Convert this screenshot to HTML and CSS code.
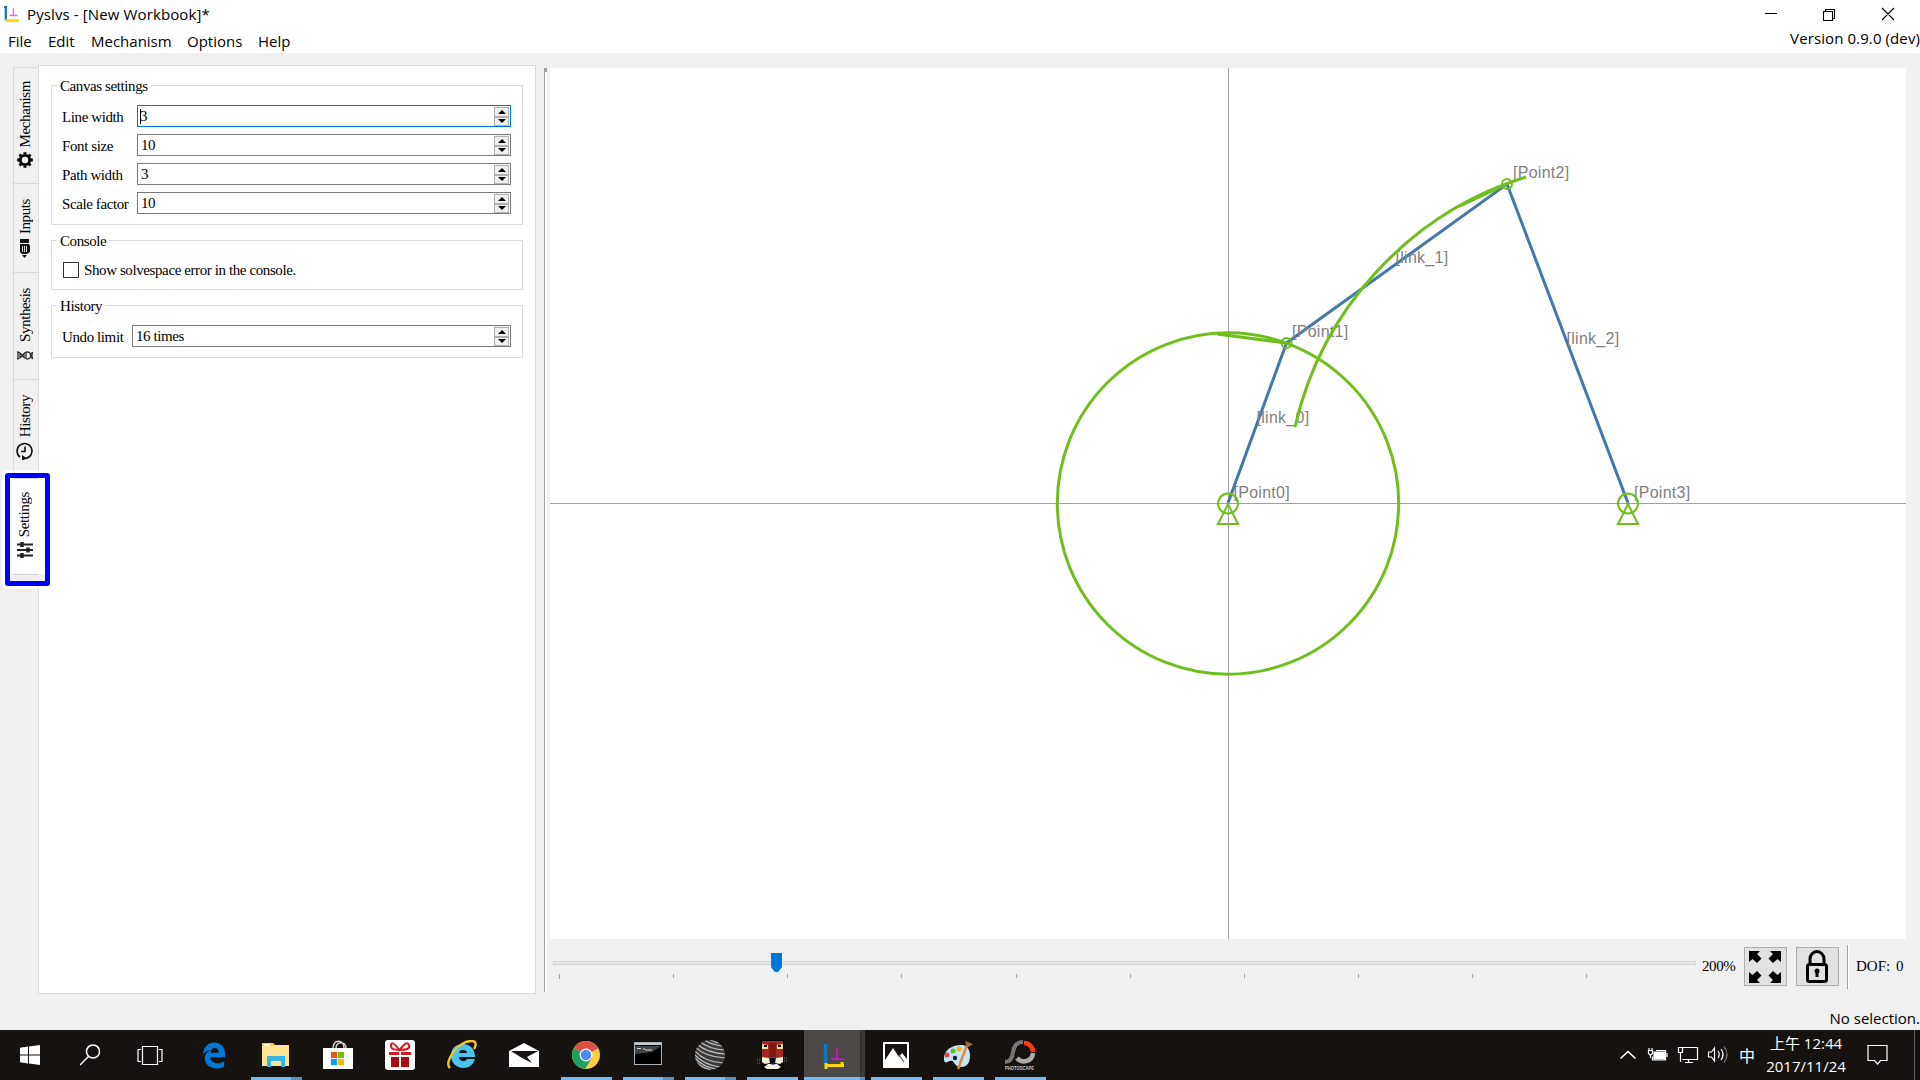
FILE: index.html
```html
<!DOCTYPE html>
<html lang="en">
<head>
<meta charset="utf-8">
<title>Pyslvs - [New Workbook]*</title>
<link rel="stylesheet" href="styles.css">
</head>
<body>
<div class="screen">
  <header class="titlebar">
    <svg class="app-icon" width="16" height="18" viewBox="0 0 16 18"><path d="M0 2h3M1.8 1v15" stroke="#1072b8" stroke-width="2.2" fill="none"/><path d="M1 15.500h14" stroke="#ffd400" stroke-width="2.500"/><path d="M9.5 3v7M5.500 10.500h8" stroke="#f25fe8" stroke-width="1.4"/></svg>
    <span class="window-title">Pyslvs - [New Workbook]*</span>
    <svg class="window-buttons" width="140" height="24" viewBox="0 0 140 24" fill="none" stroke="#000" stroke-width="1.1"><path d="M5 11.5h12M63.500 9.500h9v9h-9zM65.500 9.500v-2h9v9h-2M122 6l12 12M134 6l-12 12"/></svg>
  </header>
  <nav class="menubar">
    <span class="menu m-file">File</span><span class="menu m-edit">Edit</span><span class="menu m-mech">Mechanism</span><span class="menu m-opt">Options</span><span class="menu">Help</span>
    <span class="version">Version 0.9.0 (dev)</span>
  </nav>
  <main class="workspace">
    <aside class="tabs">
      <div class="tab t-mech"><span class="tab-label">Mechanism</span>
        <svg width="16" height="16" viewBox="-8 -8 16 16"><circle r="4.700" fill="none" stroke="#000" stroke-width="2.800"/><path d="M0-7.800V-5M0 5v2.800M-7.800 0H-5M5 0h2.800M-5.500-5.500l2 2M3.500 3.500l2 2M-5.500 5.500l2-2M3.500-3.500l2-2" stroke="#000" stroke-width="3"/></svg></div>
      <div class="tab t-in"><span class="tab-label">Inputs</span>
        <svg width="12" height="19" viewBox="0 0 12 19"><path d="M1 0h9v4H1zM1 5h9l1 2v6l-3 2H3l-2-2z" fill="#111"/><path d="M3.500 7v6M5.500 7v6M7.500 7v6" stroke="#ddd"/><path d="M3 16h5l-2.500 3z" fill="#111"/></svg></div>
      <div class="tab t-syn"><span class="tab-label">Synthesis</span>
        <svg width="16" height="9" viewBox="0 0 16 9" fill="none" stroke="#333" stroke-width="1.300"><path d="M0 1q3 0 5.300 3.500T10.600 8 16 1M0 8q3 0 5.300-3.500T10.600 1 16 8M1 1v7M3 2v5M13.500 2v5M15 1v7M7 2v5M9 2v5"/></svg></div>
      <div class="tab t-his"><span class="tab-label">History</span>
        <svg width="18" height="18" viewBox="0 0 18 18" fill="none" stroke="#111" stroke-width="1.600"><path d="M4 15A7.500 7.500 0 1 1 10 16.400M9 4.500v5H5"/><path d="M6 13l5 3.500-5 2z" fill="#111" stroke="none"/></svg></div>
      <div class="tab t-set"><span class="tab-label">Settings</span>
        <svg width="16" height="16" viewBox="0 0 16 16" stroke="#222" fill="none"><path d="M0 2.500h16M0 8h16M0 13.500h16" stroke-width="2"/><path d="M5 0v5M11 5.500v5M5 11v5" stroke-width="3.500"/></svg></div>
      <div class="highlight"></div>
    </aside>
    <section class="panel">
      <fieldset class="group g-canvas"><legend>Canvas settings</legend>
        <label class="row"><span class="name">Line width</span><span class="spin focus"><i class="caret"></i>3<b class="steps"><i class="up"></i><i class="down"></i></b></span></label>
        <label class="row"><span class="name">Font size</span><span class="spin">10<b class="steps"><i class="up"></i><i class="down"></i></b></span></label>
        <label class="row"><span class="name">Path width</span><span class="spin">3<b class="steps"><i class="up"></i><i class="down"></i></b></span></label>
        <label class="row"><span class="name">Scale factor</span><span class="spin">10<b class="steps"><i class="up"></i><i class="down"></i></b></span></label>
      </fieldset>
      <fieldset class="group g-console"><legend>Console</legend>
        <label class="check"><i class="box"></i><span>Show solvespace error in the console.</span></label>
      </fieldset>
      <fieldset class="group g-history"><legend>History</legend>
        <label class="row"><span class="name">Undo limit</span><span class="spin">16 times<b class="steps"><i class="up"></i><i class="down"></i></b></span></label>
      </fieldset>
    </section>
    <div class="splitter"></div>
    <section class="view">
      <svg class="canvas" width="1356" height="871" viewBox="550 68 1356 871">
        <path class="axis" d="M550 503.500H1906M1228.500 68V939"/>
        <g class="link"><path d="M1228 503L1286.500 343L1507 184L1628 503"/></g>
        <g class="names"><text x="1233.500" y="498">[Point0]</text><text x="1292" y="337">[Point1]</text><text x="1513" y="178">[Point2]</text><text x="1634" y="498">[Point3]</text><text x="1256.500" y="423">[link_0]</text><text x="1395.500" y="263">[link_1]</text><text x="1566.500" y="344">[link_2]</text></g>
        <g class="track"><circle cx="1228" cy="503.500" r="170.700"/><path d="M1217 334L1286.500 343M1295 427A341.200 341.200 0 0 1 1526 177M1459 206.500L1507 184"/></g>
        <g class="joint"><circle cx="1286.500" cy="343" r="5"/><circle cx="1507" cy="184" r="5"/><circle cx="1228" cy="503.500" r="10"/><path d="M1228 504l-10 20h20z"/><circle cx="1628" cy="503.500" r="10"/><path d="M1628 504l-10 20h20z"/></g>
      </svg>
      <div class="controls">
        <svg class="slider" width="1145" height="30" viewBox="551 950 1145 30"><rect x="553.500" y="961.500" width="1142" height="3" fill="#e7eaea" stroke="#d6d6d6"/><path d="M559.500 974v5M673.500 974v4M787.500 974v4M901.500 974v4M1016.500 974v4M1130.500 974v4M1244.500 974v4M1358.500 974v4M1472.500 974v4M1586.500 974v4" stroke="#a9a596"/><path d="M771 953h11v14l-3.500 4.500-2 .8-2-.8L771 967z" fill="#0078d7"/></svg>
        <span class="zoom">200%</span>
        <span class="tool"><svg width="32" height="32" viewBox="0 0 32 32"><path d="M0 0H11L8 3L12.500 7.500L8 12L3.500 8L0 11zM32 0H21l3 3-4.500 4.500L24 12l4.500-4L32 11zM0 32H11l-3-3 4.500-4.500L8 20l-4.500 4L0 21zM32 32H21l3-3-4.500-4.500L24 20l4.500 4 3.500-3z"/></svg></span>
        <span class="tool lock"><svg width="24" height="34" viewBox="0 0 24 34" fill="none" stroke="#000" stroke-width="3"><rect x="2.500" y="14.500" width="19" height="17" rx="2"/><path d="M5 14V9a7 7.500 0 0 1 14 0v5"/><circle cx="12" cy="21" r="2.500" fill="#000" stroke="none"/><path d="M12 21v6"/></svg></span>
        <span class="divider"></span>
        <span class="dof">DOF:</span><span class="dof-value">0</span>
      </div>
    </section>
  </main>
  <div class="status">No selection.</div>
  <footer class="taskbar">
    <span class="sys"><svg width="20" height="20" viewBox="0 0 20 20" fill="#fff"><path d="M0 2.800L8 1.600V9.500H0zM9 1.500L20 0V9.500H9zM0 10.500H8v7.900L0 17.200zM9 10.500H20V20L9 18.500z"/></svg></span>
    <span class="sys"><svg width="20" height="22" viewBox="0 0 20 22" fill="none" stroke="#fff" stroke-width="1.500"><circle cx="13" cy="7.500" r="6.500"/><path d="M8.500 12.500L0 21"/></svg></span>
    <span class="sys"><svg width="26" height="19" viewBox="0 0 26 19" fill="none" stroke="#fff" stroke-width="1.200"><path d="M5.500.5h15v18h-15zM4 3.500H1v12h3M22 3.500h3v12h-3"/></svg></span>
    <span class="apps">
      <span class="app"><svg width="24" height="27" viewBox="0 0 26 28"><path fill="#0078d7" d="M1 13C2 4 7 0 13 0c8 0 12 6 12 13v3H9c0 4 3 6.500 8 6.500 3 0 5-1 7-2v6c-2 1-5 1.500-8 1.500C8 28 3 23 3 17c0-5 4-8 7-9-4 0-7 2-9 5zM9.500 11H18c0-3-1-5-4-5s-4.500 2-4.500 5z"/></svg></span>
      <span class="app run multi"><svg width="28" height="24" viewBox="0 0 28 24"><path d="M0 0h11l2 2h14v21H0z" fill="#ffe394"/><path d="M0 0h11l2 3H0z" fill="#ffc936"/><path d="M2 1h6v2H2z" fill="#fff"/><path d="M5 24V13h18v11h-4v-6H9v6z" fill="#38b4e8"/></svg></span>
      <span class="app"><svg width="30" height="30" viewBox="0 0 30 30"><path d="M10 8c0-9 11-9 11 0M13 8c0-7 10-7 10 0" stroke="#ddd" fill="none" stroke-width="1.400"/><path d="M0 8h30v21H0z" fill="#fff"/><path d="M8 12h6v6H8z" fill="#f25022"/><path d="M15 12h6v6h-6z" fill="#7fba00"/><path d="M8 19h6v6H8z" fill="#00a4ef"/><path d="M15 19h6v6h-6z" fill="#ffb900"/></svg></span>
      <span class="app"><svg width="30" height="30" viewBox="0 0 30 30"><rect width="30" height="30" rx="3" fill="#fff"/><path d="M14.500 10Q5 10 6 5t8.500 5Q22 0 24 5t-9.500 5" fill="none" stroke="#dd1822" stroke-width="2"/><path d="M4 12h10v3H4zM16 12h10v3H16z" fill="#c81e24"/><path d="M6 17h8v10H6zM16 17h8v10h-8z" fill="#a50e12"/></svg></span>
      <span class="app"><svg width="30" height="30" viewBox="0 0 30 30"><path fill="#49c6f0" d="M4 16C4 8 9 4 16 4s12 5 12 13H12c0 4 6 6 8 2h8c-2 6-6 9-12 9S4 23 4 16zM12 13h8c0-4-8-4-8 0z"/><path d="M3 28C-4 22 12 0 25 1c5 0 4 5 2 8" fill="none" stroke="#f7c31d" stroke-width="2.400"/></svg></span>
      <span class="app"><svg width="30" height="24" viewBox="0 0 30 24"><path d="M0 8L15 0l15 8v16H0z" fill="#fff"/><path d="M2 8h27l-11 6 5 6-10-5z" fill="#16120f"/></svg></span>
      <span class="app run"><svg width="28" height="28" viewBox="-14 -14 28 28"><circle r="14" fill="#ffcd40"/><path d="M0 0L-12.100-7A14 14 0 0 1 12.100-7z" fill="#dd5144"/><path d="M12.100-7H0V0z" fill="#dd5144"/><path d="M0 0L-12.100-7A14 14 0 0 0-1 14L6 3z" fill="#1aa15f"/><circle r="6.500" fill="#fff"/><circle r="5.200" fill="#4c8bf5"/></svg></span>
      <span class="app run multi"><svg class="cmd" width="28" height="23" viewBox="0 0 28 23"><rect x=".500" y=".500" width="27" height="22" fill="#000" stroke="#aab0b8"/><path d="M1 1h26v2H1z" fill="#c3c9d0"/><path d="M1 4h26L18 10 1 12z" fill="#444"/><path d="M3 6.500h4M9 6.500l3 1.500h6" stroke="#ddd" fill="none"/></svg></span>
      <span class="app run multi"><svg width="30" height="30" viewBox="0 0 30 30"><defs><clipPath id="ball"><circle cx="15" cy="15" r="15"/></clipPath></defs><g clip-path="url(#ball)"><path d="M0 0h30v30H0z" fill="#3a3a3a"/><path d="M8-1q8 6 20 7M4 1q10 8 25 9M2 4q10 9 28 10M0 7q10 10 30 11M-1 10q10 12 29 13M-1 14q10 11 26 13M0 18q8 9 21 11M1 22q6 6 15 8M14-1q6 4 12 4" stroke="#bdbdbd" stroke-width="1.200" fill="none"/></g></svg></span>
      <span class="app run"><svg width="30" height="30" viewBox="0 0 30 30"><path d="M4 0h23v30H4z" fill="#000"/><path d="M5 1h21v16l-6 3h-9l-6-3z" fill="#a62620"/><path d="M12 3h7v14h-7z" fill="#7c1a17"/><path d="M5 4l6 1v4H5zM20 5l6-1v5h-6z" fill="#f0dfa0"/><path d="M7 5h3v2H7zM21 5h3v2h-3z" fill="#000"/><path d="M5 17l7 1 1 5-5 1-3-2zM26 17l-7 1-1 5 5 1 3-2zM7 27l4-3h9l4 3-3 2H10z" fill="#f5eedc"/><path d="M12 18h7l-3 4z" fill="#000"/><path d="M14 23h4v1.500h-4z" fill="#00f"/><path d="M0 20h4M0 23h4M27 18h3M27 21h3" stroke="#777" stroke-dasharray="1 1"/></svg></span>
      <span class="app run active"><svg width="24" height="28" viewBox="0 0 24 28"><path d="M3.500 3v20" stroke="#0878c0" stroke-width="3.500"/><path d="M3 24.500h19" stroke="#ffd800" stroke-width="3"/><path d="M4 22v6M20 21v4" stroke="#ffd800" stroke-width="3"/><path d="M15 7v11M9 18h12" stroke="#b01fb4" stroke-width="2"/></svg></span>
      <span class="app run"><svg width="26" height="26" viewBox="0 0 26 26"><path d="M0 0h26v26H0z" fill="#fff"/><path d="M2 2h22v15l-5-6-3 4-6-9-8 12z" fill="#16120f"/><path d="M16 13l5 7" stroke="#555" stroke-width="1.200"/></svg></span>
      <span class="app run"><svg width="30" height="30" viewBox="0 0 30 30"><path d="M1 20C0 9 11 4 20 5c8 2 8 12 6 17s-8 6-12 4c-4-3-3-6-7-5s-5 3-6-1z" fill="#c4e5f5"/><circle cx="4" cy="15" r="2.500" fill="#e4433c"/><circle cx="10" cy="11" r="2.500" fill="#65b938"/><circle cx="16" cy="9" r="2.500" fill="#f5b21b"/><circle cx="12" cy="18" r="2.200" fill="#123"/><path d="M15 29L24 5" stroke="#e0873c" stroke-width="2.400"/><path d="M22 1l8 3-6 4z" fill="#9b6b42"/></svg></span>
      <span class="app run"><svg width="32" height="31" viewBox="0 0 32 31"><path d="M1 22q7 0 8-10C10 5 14 2 19 2" fill="none" stroke="#777" stroke-width="4"/><path d="M20 3a9 9 0 0 1 9 9" fill="none" stroke="#ff3b12" stroke-width="4.500"/><path d="M29 13A9 9 0 0 1 13 18" fill="none" stroke="#aaa" stroke-width="4.500"/><text x="1" y="30" class="scape" textLength="29" lengthAdjust="spacingAndGlyphs">PHOTOSCAPE</text></svg></span>
    </span>
    <span class="tray">
      <svg class="tray-icons" width="139" height="30" viewBox="1600 1040 139 30" fill="none" stroke="#fff" stroke-width="1.200"><path d="M1620.500 1058.500l7.500-7 7.500 7" stroke-width="1.600"/><path d="M1654 1052h11v7h-11z" fill="#fff"/><path d="M1656 1050.500h9.500v9.500h-13v-3.500M1667 1053v4M1648.500 1050.500h4v3l-2 2-2-2zM1649 1050v-2M1652 1050v-2M1650.500 1055v3"/><path d="M1682.500 1047.500h15v12h-15M1688.500 1060v3M1685 1062.500h8M1678.500 1047.500h4v5h-4zM1680.500 1053v9"/><path d="M1708.500 1052h3l3-4v13l-3-4h-3zM1718 1051q2.500 3.500 0 7M1721 1049q4 5.500 0 11"/><path d="M1724 1046.500q6 8 0 16" stroke="#777"/></svg>
      <span class="ime">中</span>
      <span class="clock"><span>上午 12:44</span><span>2017/11/24</span></span>
      <svg class="note" width="22" height="22" viewBox="0 0 22 22" fill="none" stroke="#fff" stroke-width="1.200"><path d="M1 1.500h19v15h-6.500L10.500 20l-3-3.500H1z"/></svg>
      <span class="desktop"></span>
    </span>
  </footer>
</div>
</body>
</html>
```
FILE: styles.css
```css
* { box-sizing: border-box; }
body { margin: 0; background: #f0f0f0; color: #000; }
.screen { width: 1920px; height: 1080px; display: flex; flex-direction: column; overflow: hidden; font: 15px "Open Sans", "Noto Sans CJK TC", sans-serif; }
svg { display: block; flex: none; }
.titlebar { height: 30px; background: #fff; display: flex; align-items: center; padding: 0 0 2px 4px; flex: none; }
.app-icon { margin-right: 7px; }
.window-title { letter-spacing: .12px; }
.window-buttons { margin-left: auto; margin-right: 20px; }
.menubar { height: 23px; background: #fff; display: flex; align-items: center; padding-left: 8px; flex: none; letter-spacing: 0; line-height: 23px; }
.m-file { width: 40px; }
.m-edit { width: 43px; }
.m-mech { width: 96px; }
.m-opt { width: 71px; }
.version { margin-left: auto; padding-bottom: 7px; letter-spacing: .1px; }
.workspace { height: 949px; flex: none; display: flex; font-family: "Liberation Serif", serif; letter-spacing: -.4px; }

.tabs { width: 38px; padding: 14px 0 0 13px; position: relative; flex: none; }
.tab { width: 25px; border: 1px solid #d9d9d9; border-width: 1px 0 0 1px; padding-right: 2px; display: flex; flex-direction: column; align-items: center; }
.tab-label { writing-mode: vertical-rl; transform: rotate(180deg); line-height: 17px; margin-bottom: 5px; }
.t-mech { height: 116px; padding-top: 13px; }
.t-in { height: 89px; padding-top: 15px; }
.t-syn { height: 107px; padding-top: 15px; }
.t-syn .tab-label { margin-bottom: 9px; }
.t-his { height: 99px; padding-top: 15px; }
.t-set { height: 97px; padding-top: 13px; background: #fff; border-left: 0; border-bottom: 1px solid #d0d0d0; position: relative; z-index: 3; }
.highlight { position: absolute; left: 5px; top: 420px; width: 45px; height: 113px; border: 5px solid #00f; border-radius: 3px; background: linear-gradient(#fff 96px, #f0f0f0 96px); box-shadow: 0 0 0 3px #fff; z-index: 2; }

.panel { width: 498px; height: 929px; margin-top: 12px; background: #fff; border: 1px solid #d9d9d9; padding: 10px 12px; flex: none; }
.group { position: relative; margin: 0; border: 1px solid #dcdcdc; padding: 0 11px 0 10px; min-width: 0; }
.group legend { margin-left: -5px; padding: 0 3px; height: 18px; line-height: 20px; }
.g-canvas { height: 149px; }
.g-canvas .row { margin-bottom: 7px; }
.g-canvas legend { margin-bottom: 11px; }
.g-console { height: 59px; margin-top: 6px; }
.g-console legend { margin-bottom: 11px; }
.g-history { height: 62px; margin-top: 6px; }
.g-history legend { margin-bottom: 11px; }
.row { display: flex; height: 22px; align-items: center; justify-content: space-between; }
.name { padding-top: 2px; }
.spin { width: 374px; height: 22px; border: 1px solid #7a7a7a; display: flex; align-items: center; padding-left: 3px; background: #fff; position: relative; line-height: 22px; }
.g-history .spin { width: 379px; }
.focus { border-color: #0078d7; padding-left: 2px; }
.caret { position: absolute; left: 2px; top: 3px; width: 1px; height: 15px; background: #000; }
.steps { width: 15px; height: 20px; margin-left: auto; display: flex; flex-direction: column; background: #f0f0f0; padding: 1px 0 0; margin-right: 1px; }
.steps i { height: 9px; border: 1px solid #b0b0b0; display: flex; justify-content: center; align-items: center; flex: 1; }
.steps i::before { content: ""; border: 4px solid transparent; border-top-width: 0; border-bottom: 4px solid #000; }
.steps .down::before { border-top: 4px solid #000; border-bottom: 0; }
.check { display: flex; align-items: center; height: 19px; gap: 5px; margin-left: 1px; }
.box { width: 16px; height: 16px; border: 1px solid #333; }
.check span { padding-top: 1px; }

.splitter { width: 3px; height: 924px; margin: 15px 3px 0 8px; background: #fff; border-left: 1px solid #a0a0a0; border-top: 4px solid #a0a0a0; flex: none; }
.view { width: 1370px; padding-top: 15px; }
.canvas { background: #fff; }
.axis { stroke: #a0a0a4; fill: none; }
.link { stroke: #4477ad; stroke-width: 3; fill: none; }
.track { stroke: #6fbf1c; stroke-width: 3; fill: none; }
.joint { stroke: #6fbf1c; stroke-width: 2; fill: none; }
.names { font: 16px "Liberation Sans", sans-serif; fill: #808080; letter-spacing: .28px; }
.controls { height: 55px; display: flex; align-items: center; padding-left: 1px; }
.slider { margin-top: -3px; }
.zoom { width: 48px; padding-left: 6px; }
.tool { width: 43px; height: 39px; border: 1px solid #adadad; background: #e1e1e1; display: flex; align-items: center; justify-content: center; margin-right: 9px; padding-right: 2px; flex: none; }
.lock { margin-right: 8px; }
.divider { width: 2px; height: 44px; background: #fff; border-left: 1px solid #a0a0a0; }
.dof { padding-left: 7px; width: 47px; letter-spacing: 0; }
.status { height: 28px; line-height: 32px; text-align: right; letter-spacing: 0; flex: none; }

.taskbar { height: 50px; background: #16120f; display: flex; flex: none; color: #fff; letter-spacing: 0; }
.sys { width: 60px; display: flex; align-items: center; justify-content: center; }
.apps { display: flex; margin-left: 3px; }
.app { width: 62px; display: flex; align-items: center; justify-content: center; position: relative; }
.cmd { margin-bottom: 3px; }
.run::after { content: ""; position: absolute; left: 6px; bottom: 0; width: 51px; height: 3px; background: #76b9f5; }
.multi::after { background: linear-gradient(90deg, #76b9f5 40px, #5c8fbd 40px); }
.active::before { content: ""; position: absolute; inset: 0 0 0 1px; background: linear-gradient(90deg, #4c4947 56px, #262422 56px, #3c3937 57px); }
.active svg { position: relative; }
.active::after { left: 1px; width: 61px; background: linear-gradient(90deg, #76b9f5 56px, #5c8fbd 56px); }
.scape { font: bold 6px "Liberation Sans", sans-serif; fill: #ccc; }
.tray { margin-left: auto; display: flex; align-items: center; height: 50px; }
.ime { width: 24px; font: 16px "Noto Sans CJK TC", sans-serif; }
.clock { display: flex; flex-direction: column; align-items: center; line-height: 23px; width: 86px; white-space: nowrap; }
.note { margin-left: 18px; margin-right: 25px; }
.desktop { width: 6px; height: 50px; border-left: 1px solid #666; }
```
